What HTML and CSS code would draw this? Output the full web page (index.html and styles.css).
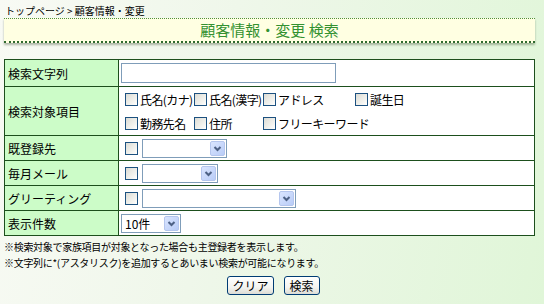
FILE: index.html
```html
<!DOCTYPE html>
<html>
<head>
    <meta charset="utf-8">
    <title>顧客情報・変更 検索</title>
    <link rel="stylesheet" href="styles.css">
</head>
<body>
<div class="page">
    <div class="crumb">トップページ &gt; 顧客情報・変更</div>
    <div class="titlebar">顧客情報・変更 検索</div>

    <form name="form1" action="#" method="POST">
    <table class="search">
        <tr class="r1">
            <th>検索文字列</th>
            <td><input type="text" name="wd" class="textbox"></td>
        </tr>
        <tr class="r2">
            <th>検索対象項目</th>
            <td>
                <table class="targets">
                    <tr>
                        <td class="c1"><label><input type="checkbox" class="chk">氏名(カナ)</label></td>
                        <td class="c2"><label><input type="checkbox" class="chk">氏名(漢字)</label></td>
                        <td class="c3"><label><input type="checkbox" class="chk">アドレス</label></td>
                        <td class="c4"><label><input type="checkbox" class="chk">誕生日</label></td>
                    </tr>
                    <tr>
                        <td class="c1"><label><input type="checkbox" class="chk">勤務先名</label></td>
                        <td class="c2"><label><input type="checkbox" class="chk">住所</label></td>
                        <td class="c3" colspan="2"><label><input type="checkbox" class="chk">フリーキーワード</label></td>
                    </tr>
                </table>
            </td>
        </tr>
        <tr>
            <th>既登録先</th>
            <td><input type="checkbox" class="chk pre"><select class="sel w85"><option></option></select></td>
        </tr>
        <tr>
            <th>毎月メール</th>
            <td><input type="checkbox" class="chk pre"><select class="sel w76"><option></option></select></td>
        </tr>
        <tr>
            <th>グリーティング</th>
            <td><input type="checkbox" class="chk pre"><select class="sel w154"><option></option></select></td>
        </tr>
        <tr>
            <th>表示件数</th>
            <td><select class="sel w60 count"><option>10件</option><option>20件</option><option>50件</option></select></td>
        </tr>
    </table>

    <div class="notes">
        ※検索対象で家族項目が対象となった場合も主登録者を表示します。<br>
        ※文字列に*(アスタリスク)を追加するとあいまい検索が可能になります。
    </div>

    <div class="buttons">
        <input type="reset" value="クリア" class="btn">
        <input type="submit" value="検索" class="btn">
    </div>
    </form>
</div>
</body>
</html>
```

FILE: styles.css
```css
html, body
{
margin: 0;
height: 100%;
}
body
{
background: linear-gradient(100deg, #f8faf4 0%, #eff7ea 40%, #e0f6d8 100%);
font-family: "Noto Sans CJK JP", "Liberation Sans", sans-serif;
font-size: 12px;
color: #000;
}
.page
{
width: 531px;
margin-left: 4px;
padding-top: 4px;
}
.crumb
{
font-size: 10px;
line-height: 14px;
height: 14px;
padding-left: 1px;
}
.titlebar
{
margin-top: 0;
height: 22px;
line-height: 22px;
background: #ffffe2;
border-top: 1px dotted #4f8f3f;
border-bottom: 2px dotted #2e6a2e;
box-shadow: 0 2px 2px rgba(40, 60, 30, 0.35);
text-align: center;
font-size: 15px;
color: #339130;
}
table.search
{
margin-top: 16px;
width: 531px;
border-collapse: collapse;
border: 1px solid #1d4f1d;
background: #fff;
}
table.search > tbody > tr > th,
table.search > tbody > tr > td
{
border: 1px solid #1d4f1d;
height: 24px;
padding: 0;
vertical-align: middle;
}
table.search > tbody > tr > th
{
width: 110px;
background: #ccfcc8;
font-weight: normal;
text-align: left;
padding-left: 3px;
}
table.search > tbody > tr > td
{
padding-left: 2px;
}
table.search tr.r1 > th,
table.search tr.r1 > td
{
height: 26px;
}
table.search tr.r2 > th,
table.search tr.r2 > td
{
height: 47px;
}
.textbox
{
box-sizing: border-box;
width: 215px;
height: 20px;
margin: 0;
border: 1px solid #7f9db9;
padding: 1px 3px;
font: inherit;
vertical-align: middle;
}
table.targets
{
border-collapse: collapse;
table-layout: fixed;
width: 330px;
margin-left: 4px;
}
table.targets td
{
padding: 0;
height: 24px;
white-space: nowrap;
overflow: visible;
vertical-align: middle;
}
table.targets td.c1,
table.targets td.c2
{
width: 69px;
}
table.targets td.c3
{
width: 92px;
}
table.targets label
{
display: flex;
align-items: center;
gap: 2px;
letter-spacing: -0.6px;
}
.chk
{
-webkit-appearance: none;
appearance: none;
box-sizing: border-box;
flex: none;
width: 13px;
height: 13px;
margin: 0;
border: 1px solid #1c5180;
background: linear-gradient(135deg, #dcdcd5 0%, #f4f4f0 70%, #fff 100%);
vertical-align: middle;
}
.chk:checked
{
background: linear-gradient(135deg, #dcdcd5 0%, #fff 100%);
box-shadow: inset 0 0 0 2px #fff, inset 0 0 0 5px #21a121;
}
.chk.pre
{
margin-left: 4px;
margin-right: 4px;
}
.sel
{
-webkit-appearance: none;
appearance: none;
box-sizing: border-box;
height: 19px;
margin: 0;
padding: 0 18px 0 3px;
border: 1px solid #7f9db9;
font: inherit;
font-size: 12px;
color: #000;
vertical-align: middle;
background: #fff url("data:image/svg+xml;utf8,<svg xmlns='http://www.w3.org/2000/svg' width='15' height='15'><defs><linearGradient id='g' x1='0' y1='0' x2='1' y2='1'><stop offset='0' stop-color='%23dbe6ff'/><stop offset='1' stop-color='%23b7cbf7'/></linearGradient></defs><rect x='0.5' y='0.5' width='14' height='14' rx='1.5' fill='url(%23g)' stroke='%23b5c6ee'/><path d='M4.5 6l3 3 3-3' fill='none' stroke='%234d6185' stroke-width='2'/></svg>") no-repeat right 1px center;
}
.sel.w60 { width: 60px; }
.sel.w76 { width: 76px; }
.sel.w85 { width: 85px; }
.sel.w154 { width: 154px; }
.notes
{
margin-top: 3px;
font-size: 10px;
line-height: 16px;
letter-spacing: -0.3px;
}
.buttons
{
margin-top: 5px;
display: flex;
justify-content: center;
gap: 10px;
padding-left: 8px;
}
.btn
{
box-sizing: border-box;
height: 19px;
min-width: 36px;
padding: 0 4px;
border: 1px solid #003c74;
border-radius: 3px;
background: linear-gradient(#fff 0%, #f4f4f0 60%, #dcdcd5 100%);
font: inherit;
font-size: 12px;
line-height: 16px;
color: #000;
cursor: pointer;
}
```
